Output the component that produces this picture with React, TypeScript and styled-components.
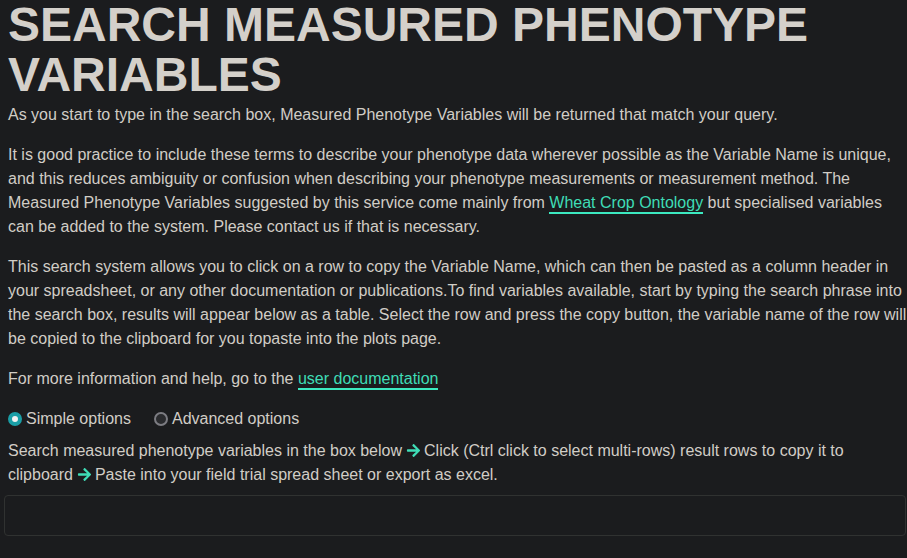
import React, { useState } from 'react';
import styled, { createGlobalStyle } from 'styled-components';
import { FaArrowRight } from 'react-icons/fa';

const GlobalStyle = createGlobalStyle`
  html, body {
    margin: 0;
    padding: 0;
    background: #1b1c1e;
  }
  body {
    font-family: "Liberation Sans", Arial, sans-serif;
    color: #d1cdc6;
    overflow: hidden;
  }
`;

const Page = styled.div`
  padding: 0 0 0 8px;
  min-height: 558px;
  box-sizing: border-box;
`;

const Title = styled.h1`
  margin: 0 0 2px;
  font-size: 48px;
  line-height: 1.05;
  font-weight: 700;
  color: #d4d0ca;
`;

const Para = styled.p<{ $gap?: number }>`
  margin: 0 0 ${(p) => (p.$gap ?? 16)}px;
  font-size: 16px;
  line-height: 24px;
`;

const Link = styled.a`
  color: #3fdcb6;
  text-decoration: none;
  border-bottom: 2px solid #3ce9c0;
  padding-bottom: 1px;
`;

const Arrow = styled(FaArrowRight)`
  color: #3fdcb6;
  font-size: 15px;
  vertical-align: -2px;
  margin: 0 3px 0 4px;
`;

const RadioRow = styled.div`
  display: flex;
  align-items: center;
  gap: 23px;
  margin: 0 0 8px;
  height: 24px;
  font-size: 16px;
`;

const RadioLabel = styled.label`
  display: flex;
  align-items: center;
  gap: 4px;
  cursor: pointer;
`;

const RadioDot = styled.span<{ $on: boolean }>`
  width: 14px;
  height: 14px;
  box-sizing: border-box;
  border-radius: 50%;
  border: ${(p) => (p.$on ? '4px solid #1a9ea6' : '2px solid #7c7c82')};
  background: ${(p) => (p.$on ? '#f2f2f2' : '#2a2b2e')};
`;

const SearchBox = styled.input`
  display: block;
  box-sizing: border-box;
  margin: 0 0 0 -4px;
  width: calc(100% + 3px);
  height: 41px;
  background: #1b1c1e;
  border: 1px solid #303231;
  border-radius: 4px;
  color: #d1cdc6;
  font-size: 16px;
  padding: 0 10px;
  outline: none;
`;

export default function App() {
  const [mode, setMode] = useState<'simple' | 'advanced'>('simple');
  return (
    <>
      <GlobalStyle />
      <Page>
        <Title>SEARCH MEASURED PHENOTYPE VARIABLES</Title>
        <Para>
          As you start to type in the search box, Measured Phenotype Variables will be returned that match your query.
        </Para>
        <Para>
          It is good practice to include these terms to describe your phenotype data wherever possible as the Variable Name is
          unique, and this reduces ambiguity or confusion when describing your phenotype measurements or measurement method.
          The Measured Phenotype Variables suggested by this service come mainly from{' '}
          <Link href="#">Wheat Crop Ontology</Link> but specialised variables can be added to the system. Please contact us
          if that is necessary.
        </Para>
        <Para>
          This search system allows you to click on a row to copy the Variable Name, which can then be pasted as a column
          header in your spreadsheet, or any other documentation or publications.To find variables available, start by
          typing the search phrase into the search box, results will appear below as a table. Select the row and press the
          copy button, the variable name of the row will be copied to the clipboard for you topaste into the plots page.
        </Para>
        <Para>
          For more information and help, go to the <Link href="#">user documentation</Link>
        </Para>
        <RadioRow>
          <RadioLabel onClick={() => setMode('simple')}>
            <RadioDot $on={mode === 'simple'} />
            Simple options
          </RadioLabel>
          <RadioLabel onClick={() => setMode('advanced')}>
            <RadioDot $on={mode === 'advanced'} />
            Advanced options
          </RadioLabel>
        </RadioRow>
        <Para $gap={8}>
          Search measured phenotype variables in the box below
          <Arrow />
          Click (Ctrl click to select multi-rows) result rows to copy it to clipboard
          <Arrow />
          Paste into your field trial spread sheet or export as excel.
        </Para>
        <SearchBox type="text" />
      </Page>
    </>
  );
}
